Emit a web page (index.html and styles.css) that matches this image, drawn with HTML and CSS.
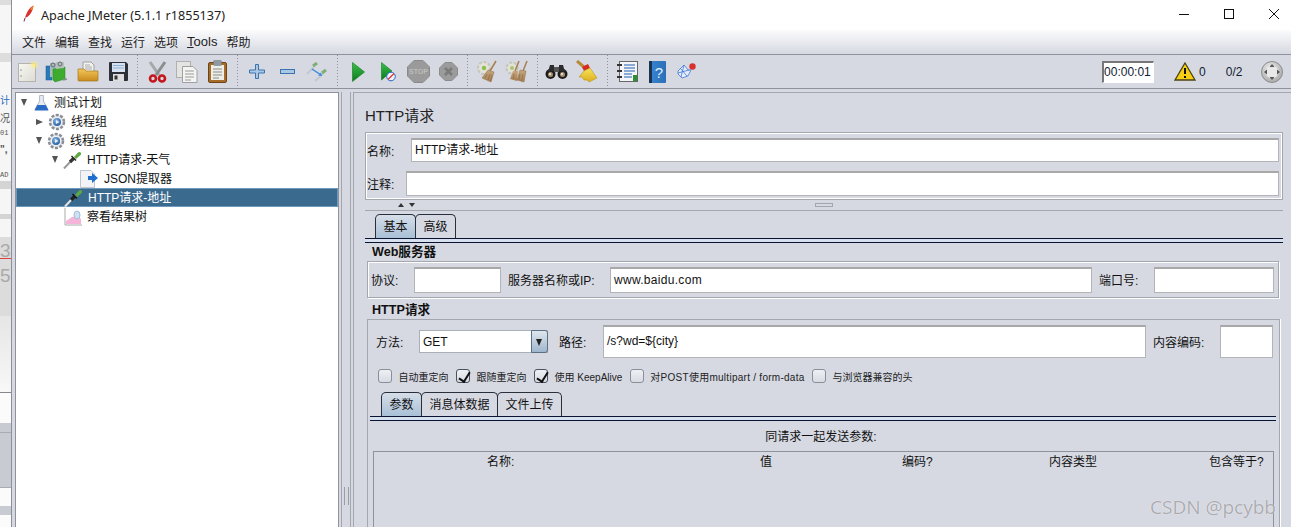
FILE: index.html
```html
<!DOCTYPE html>
<html lang="zh">
<head>
<meta charset="utf-8">
<title>Apache JMeter</title>
<link rel="stylesheet" href="styles.css">
</head>
<body>
<svg class="defs" width="0" height="0" aria-hidden="true">
  <defs>
    <linearGradient id="gFolder" x1="0" y1="0" x2="0" y2="1"><stop offset="0" stop-color="#f4c65a"/><stop offset="1" stop-color="#c98a1c"/></linearGradient>
    <linearGradient id="gPage" x1="0" y1="0" x2="1" y2="1"><stop offset="0" stop-color="#f8f8f2"/><stop offset="1" stop-color="#dcdcd4"/></linearGradient>
    <linearGradient id="gPlay" x1="0" y1="0" x2="0" y2="1"><stop offset="0" stop-color="#3bc04a"/><stop offset="1" stop-color="#0c7a1e"/></linearGradient>
    <linearGradient id="gBroom" x1="0" y1="0" x2="0" y2="1"><stop offset="0" stop-color="#f7e35a"/><stop offset="1" stop-color="#dcae1e"/></linearGradient>
    <linearGradient id="gStraw" x1="0" y1="0" x2="0" y2="1"><stop offset="0" stop-color="#c8a67c"/><stop offset="1" stop-color="#a67e52"/></linearGradient>
    <linearGradient id="gBook" x1="0" y1="0" x2="1" y2="0"><stop offset="0" stop-color="#3a86d2"/><stop offset="1" stop-color="#2a6fb8"/></linearGradient>
    <radialGradient id="gBall" cx=".4" cy=".35" r=".7"><stop offset="0" stop-color="#8fbbe6"/><stop offset="1" stop-color="#1f5a9c"/></radialGradient>
    <radialGradient id="gKnob" cx=".4" cy=".3" r=".8"><stop offset="0" stop-color="#e8e8e8"/><stop offset="1" stop-color="#a4a4a4"/></radialGradient>
    <radialGradient id="gGlow" cx=".5" cy=".5" r=".5"><stop offset="0" stop-color="#ffef7a"/><stop offset="1" stop-color="#ffef7a" stop-opacity="0"/></radialGradient>
  </defs>
</svg>
<div class="page">
  <div class="backwin">
    <div class="bw s5 grey"></div>
    <div class="bw s48"></div>
    <div class="bw s9 grey"></div>
    <div class="bw s28"></div>
    <div class="bw bwt t-blue">计</div>
    <div class="bw bwt">况</div>
    <div class="bw bwt t-small">01</div>
    <div class="bw bwt t-gap">",</div>
    <div class="bw bwt t-small t-gap2">AD</div>
    <div class="bw s8 grey2"></div>
    <div class="bw s25"></div>
    <div class="bw s5 grey2"></div>
    <div class="bw s18"></div>
    <div class="bw big"><span class="bigt">3</span><span class="wavy"></span><span class="bigt b2">5</span></div>
    <div class="bw s77 grad"></div>
    <div class="bw s30 white"></div>
    <div class="bw s9 grey3"></div>
    <div class="bw s56 grey3 ruled"></div>
    <div class="bw s18 white"></div>
    <div class="bw s9 grey3"></div>
    <div class="bw fill white"></div>
  </div>
  <div class="app">
    <header class="titlebar">
      <svg class="feather" viewBox="0 0 14 18" width="14" height="18"><path d="M11.500 0.500 C8 2 4.500 7 3 13 L6 11.500 C9 9 11 5 11.500 0.500Z" fill="#d8322a"/><path d="M11.500 0.500 C10 1.500 9 3 8 4.500 L10.500 5 C11 3.500 11.300 2 11.500 0.500Z" fill="#f08a2a"/><path d="M3 13 L2 16.500" stroke="#7a2a50" stroke-width="1"/></svg>
      <span class="title">Apache JMeter (5.1.1 r1855137)</span>
      <div class="winbtns">
        <svg width="12" height="12" viewBox="0 0 12 12"><path d="M1 6.500H11" stroke="#111" stroke-width="1"/></svg>
        <svg width="12" height="12" viewBox="0 0 12 12"><rect x="1.500" y="1.500" width="9" height="9" fill="none" stroke="#111"/></svg>
        <svg width="12" height="12" viewBox="0 0 12 12"><path d="M1 1L11 11M11 1L1 11" stroke="#111"/></svg>
      </div>
    </header>
    <nav class="menubar">
      <span>文件</span><span>编辑</span><span>查找</span><span>运行</span><span>选项</span><span class="tools"><u>T</u>ools</span><span>帮助</span>
    </nav>
    <div class="toolbar">
      <div class="tgroup g1">
        <span class="slot"><svg width="22" height="22" viewBox="0 0 22 22"><rect x="1.500" y="2.500" width="17" height="18" fill="url(#gPage)" stroke="#b4b4ac"/><circle cx="4" cy="9" r=".8" fill="#888"/><circle cx="4" cy="15" r=".8" fill="#888"/><circle cx="17" cy="4" r="5" fill="url(#gGlow)"/></svg></span>
        <span class="slot"><svg class="nudge" width="24" height="24" viewBox="0 0 24 24"><rect x="2" y="6" width="6" height="14" fill="#2a79b8" stroke="#1c5a90" stroke-width=".5"/><rect x="6" y="3" width="6" height="14" fill="#a8bcba"/><circle cx="9" cy="5" r="2" fill="none" stroke="#667"/><path d="M9 9L21 7V19L11 22L9 20Z" fill="#3cab2e" stroke="#2a8a20" stroke-width=".5"/><path d="M12 2H20V8L12 9Z" fill="#b4c2bb"/><circle cx="16" cy="4" r="2" fill="none" stroke="#667"/><path d="M19 20L23 19" stroke="#8a8a8a" stroke-width="1.500"/></svg></span>
        <span class="slot"><svg width="22" height="22" viewBox="0 0 22 22"><path d="M6 1H14L17 4V12H6Z" fill="#f2f2ee" stroke="#a0a0a0"/><path d="M8 4H13M8 6H15M8 8H15" stroke="#aaa"/><path d="M1 8H7L9 10H21V19Q21 20 20 20H2Q1 20 1 19Z" fill="url(#gFolder)" stroke="#a8781e" stroke-width=".7"/></svg></span>
        <span class="slot"><svg width="21" height="21" viewBox="0 0 21 21"><path d="M1 2Q1 1 2 1H18L20 3V19Q20 20 19 20H2Q1 20 1 19Z" fill="#2c3038"/><rect x="4" y="2" width="13" height="9" fill="#d6e2f0"/><path d="M5 4.500H16M5 7H16" stroke="#8fb0d4"/><rect x="5" y="13" width="11" height="7" fill="#dedede"/><rect x="6.500" y="14.500" width="3" height="4" fill="#333"/></svg></span>
      </div>
      <div class="tgroup g2">
        <span class="slot"><svg width="19" height="22" viewBox="0 0 19 22"><path d="M2 1L11 14" stroke="#a4a8a8" stroke-width="3"/><path d="M17 1L8 14" stroke="#8a8e8e" stroke-width="3"/><circle cx="5" cy="17.500" r="3" fill="none" stroke="#c4161c" stroke-width="2.600"/><circle cx="14" cy="17.500" r="3" fill="none" stroke="#c4161c" stroke-width="2.600"/></svg></span>
        <span class="slot"><svg width="22" height="22" viewBox="0 0 22 22"><rect x=".5" y=".5" width="14" height="16" fill="#e4e4e2" stroke="#b0b0ae"/><path d="M6.500 5.500H17L21 9.500V21.500H6.500Z" fill="#f4f4f2" stroke="#a0a0a0"/><path d="M9 10H18M9 13H18M9 16H18M9 19H15" stroke="#9a9a9a"/></svg></span>
        <span class="slot"><svg width="19" height="23" viewBox="0 0 19 23"><rect x=".5" y="2.500" width="18" height="20" rx="1.500" fill="#a66c2a" stroke="#6e4415"/><path d="M3 5H16V20H3Z" fill="#eeeee8"/><rect x="5.500" y=".5" width="8" height="5" rx="1" fill="#8f9aa0" stroke="#6a7278" stroke-width=".5"/><path d="M5 9H14M5 12H14M5 15H14M5 18H11" stroke="#8a8a8a"/></svg></span>
      </div>
      <div class="tgroup g3">
        <span class="slot"><svg width="16" height="15" viewBox="0 0 16 15"><path d="M6.500 .5H9.500V6H15.500V9H9.500V14.500H6.500V9H.5V6H6.500Z" fill="#a9c8e4" stroke="#3a73ad"/></svg></span>
        <span class="slot"><svg width="15" height="6" viewBox="0 0 15 6"><rect x=".5" y=".5" width="14" height="4" fill="#a9c8e4" stroke="#3a73ad"/></svg></span>
        <span class="slot"><svg width="22" height="20" viewBox="0 0 22 20"><path d="M1 12L8 5" stroke="#c4c8cc" stroke-width="2"/><path d="M7 4L11 1" stroke="#7fae72" stroke-width="3"/><path d="M9 19L17 12" stroke="#c4c8cc" stroke-width="2"/><path d="M16 11L20 8" stroke="#7fae72" stroke-width="3"/><path d="M6 7L15 13" stroke="#3a8ae0" stroke-width="1.500"/><path d="M16 14L12 13.500L15 10.500Z" fill="#3a8ae0"/></svg></span>
      </div>
      <div class="tgroup g4">
        <span class="slot"><svg width="13" height="20" viewBox="0 0 13 20"><path d="M.5 .5L12.500 10L.5 19.500Z" fill="url(#gPlay)" stroke="#0f7a1c" stroke-width=".6"/></svg></span>
        <span class="slot"><svg width="15" height="20" viewBox="0 0 15 20"><path d="M.5 .5L11 9L.5 18Z" fill="url(#gPlay)" stroke="#0f7a1c" stroke-width=".6"/><circle cx="10" cy="14.500" r="4.300" fill="#eef2fa" stroke="#2a62c8"/><path d="M7 17.500L13 11.500" stroke="#d33" stroke-width="1.200"/></svg></span>
        <span class="slot"><svg width="23" height="23" viewBox="0 0 23 23"><path d="M7 .5H16L22.500 7V16L16 22.500H7L.5 16V7Z" fill="#9a9a9a" stroke="#8a8a8a"/><text x="11.500" y="14" text-anchor="middle" class="stoptxt">STOP</text></svg></span>
        <span class="slot"><svg width="19" height="19" viewBox="0 0 19 19"><path d="M6 .5H13L18.500 6V13L13 18.500H6L.5 13V6Z" fill="#9b9b9b" stroke="#8c8c8c"/><path d="M6 6L13 13M13 6L6 13" stroke="#7a7a7a" stroke-width="2.500"/></svg></span>
      </div>
      <div class="tgroup g5">
        <span class="slot"><svg width="21" height="23" viewBox="0 0 21 23"><circle cx="8" cy="8" r="6" fill="#e2e2d8" stroke="#c4c4ba" stroke-width="2" stroke-dasharray="3 1.500"/><circle cx="8" cy="8" r="2.200" fill="#8cc04a"/><path d="M20 1L14 11" stroke="#a67e52" stroke-width="1.500"/><path d="M12 10L18 12L15 22L6 18Z" fill="url(#gStraw)" stroke="#8c6c47" stroke-width=".5"/><path d="M11 14L9 18M14 14L12 20M16 15L14.500 21" stroke="#8c6c47" stroke-width=".7"/></svg></span>
        <span class="slot"><svg width="23" height="23" viewBox="0 0 23 23"><circle cx="7" cy="8" r="5.500" fill="#e2e2d8" stroke="#c4c4ba" stroke-width="2" stroke-dasharray="3 1.500"/><circle cx="7" cy="8" r="2" fill="#a9c66a"/><path d="M14 1L10 11M22 1L18 11" stroke="#a67e52" stroke-width="1.500"/><path d="M8 11L13 11L12 21L5 19Z" fill="url(#gStraw)"/><path d="M15 10L21 11L19 22L12 20Z" fill="url(#gStraw)" stroke="#8c6c47" stroke-width=".5"/><path d="M9 14L8 19M15 14L14 20M18 14L16.500 21" stroke="#8c6c47" stroke-width=".7"/></svg></span>
      </div>
      <div class="tgroup g6">
        <span class="slot"><svg width="23" height="17" viewBox="0 0 23 17"><circle cx="5.500" cy="11" r="5" fill="#1c1c1c"/><circle cx="17.500" cy="11" r="5" fill="#1c1c1c"/><path d="M3 9L5 2H9V8ZM20 9L18 2H14V8Z" fill="#2c2c2c"/><rect x="9" y="4" width="5" height="5" fill="#555"/><circle cx="5.500" cy="11.500" r="2.500" fill="#a89070"/><circle cx="17.500" cy="11.500" r="2.500" fill="#a89070"/><circle cx="5" cy="11" r="1" fill="#eee"/><circle cx="17" cy="11" r="1" fill="#eee"/></svg></span>
        <span class="slot"><svg width="23" height="23" viewBox="0 0 23 23"><path d="M2 1L9 7" stroke="#b98a3a" stroke-width="3"/><path d="M7 7L13 4L15 8L9 11Z" fill="#d62c20"/><path d="M9 11L15 8L22 18L14 22L12 20L9 20L7 17L4 17Z" fill="url(#gBroom)" stroke="#b8961c" stroke-width=".6"/></svg></span>
      </div>
      <div class="tgroup g7">
        <span class="slot"><svg width="21" height="21" viewBox="0 0 21 21"><rect x="2.500" y=".5" width="18" height="20" fill="#f4f5f8" stroke="#666"/><path d="M7 4H18M7 7H18M7 10H18M7 13H15M7 16H15" stroke="#1d5fb0"/><rect x="16" y="14" width="4" height="6" fill="#2a9030"/><path d="M0 4H5M0 10H5M0 16H5" stroke="#333" stroke-width="2"/></svg></span>
        <span class="slot"><svg width="17" height="22" viewBox="0 0 17 22"><rect width="17" height="22" rx="1" fill="url(#gBook)"/><rect width="3" height="22" fill="#1b3350"/><text x="10" y="17" text-anchor="middle" class="booktxt">?</text></svg></span>
        <span class="slot"><svg width="20" height="17" viewBox="0 0 20 17"><circle cx="15.500" cy="3.500" r="3.200" fill="#d8322c"/><path d="M1 8L7 2L11 7L14 7L11 13L5 15L1 11Z" fill="#e6ecf6" stroke="#3f78d8" stroke-width=".8"/><path d="M3 5L10 13M7 2L4 14M1 10L12 7" stroke="#3f78d8" stroke-width=".8"/></svg></span>
      </div>
      <div class="status">
        <span class="timer">00:00:01</span>
        <svg class="warn" width="22" height="19" viewBox="0 0 22 19"><path d="M11 1L21 18H1Z" fill="#f4cf15" stroke="#4b4210" stroke-width="1.300"/><path d="M11 6V12M11 14V16" stroke="#111" stroke-width="2"/></svg>
        <span class="count">0</span>
        <span class="ratio">0/2</span>
        <svg class="knob" width="22" height="22" viewBox="0 0 22 22"><circle cx="11" cy="11" r="10.500" fill="url(#gKnob)" stroke="#8c8c8c"/><circle cx="11" cy="11" r="6.500" fill="#e8e8e8"/><path d="M11 3L13.500 6H8.500ZM11 19L13.500 16H8.500ZM3 11L6 8.500V13.500ZM19 11L16 8.500V13.500Z" fill="#555"/></svg>
      </div>
    </div>
    <main class="main">
      <section class="treepane">
        <div class="row r0"><i class="arrow down root"></i>
          <svg width="15" height="18" viewBox="0 0 16 18"><path d="M6 1H10V7L15 16H1L6 7Z" fill="#e8edf3" stroke="#a8b2c0"/><path d="M3.500 11H12.500L15.500 17H.5Z" fill="#2a6ac4"/></svg>
          <span>测试计划</span></div>
        <div class="row r1"><i class="arrow right"></i>
          <svg width="18" height="18" viewBox="0 0 18 18"><circle cx="9" cy="9" r="7" fill="#e4e7ec" stroke="#8a8e96" stroke-width="2.500" stroke-dasharray="3 1.500"/><circle cx="9" cy="9" r="5" fill="#f0f2f6"/><circle cx="9" cy="9" r="4" fill="url(#gBall)"/><path d="M8 7L11.500 9L8 11Z" fill="#e6eef6"/></svg>
          <span>线程组</span></div>
        <div class="row r1"><i class="arrow down"></i>
          <svg width="18" height="18" viewBox="0 0 18 18"><circle cx="9" cy="9" r="7" fill="#e4e7ec" stroke="#8a8e96" stroke-width="2.500" stroke-dasharray="3 1.500"/><circle cx="9" cy="9" r="5" fill="#f0f2f6"/><circle cx="9" cy="9" r="4" fill="url(#gBall)"/><path d="M8 7L11.500 9L8 11Z" fill="#e6eef6"/></svg>
          <span>线程组</span></div>
        <div class="row r2"><i class="arrow down"></i>
          <svg width="19" height="18" viewBox="0 0 19 18"><path d="M1 17.500L8 10" stroke="#9a9a9a" stroke-width="2"/><path d="M7 11L10.500 7.500" stroke="#333" stroke-width="3.200"/><path d="M8.500 5L13 9.500" stroke="#222" stroke-width="1.500"/><path d="M11 6L15 1.500Q17 .5 18 2Q18.500 3.500 17 4.500L13 8Z" fill="#5da840"/></svg>
          <span>HTTP请求-天气</span></div>
        <div class="row r3">
          <svg width="19" height="18" viewBox="0 0 19 18"><path d="M.5 .5H11L14.500 4V17.500H.5Z" fill="#f2f3f6" stroke="#c0c4cc"/><path d="M8 6H12V3L18 8L12 13V10H8Z" fill="#1f6fd0"/></svg>
          <span>JSON提取器</span></div>
        <div class="row r2 sel">
          <svg width="19" height="18" viewBox="0 0 19 18"><path d="M1 17.500L8 10" stroke="#e6e6e6" stroke-width="2"/><path d="M7 11L10.500 7.500" stroke="#222" stroke-width="3.200"/><path d="M8.500 5L13 9.500" stroke="#111" stroke-width="1.500"/><path d="M11 6L15 1.500Q17 .5 18 2Q18.500 3.500 17 4.500L13 8Z" fill="#5da840"/></svg>
          <span>HTTP请求-地址</span></div>
        <div class="row r2 leaf">
          <svg width="18" height="18" viewBox="0 0 18 18"><path d="M1 0V17H18" fill="none" stroke="#aaa"/><path d="M2 16V13L8 9L13 8L17 11V16Z" fill="#f5b5d8"/><ellipse cx="13" cy="7" rx="3" ry="4" fill="#cfe0f2" stroke="#a4bcd6"/></svg>
          <span>察看结果树</span></div>
      </section>
      <div class="split"><span class="grip"></span></div>
      <section class="editor">
        <h1 class="ed-title">HTTP请求</h1>
        <div class="namebox">
          <div class="namerow nr1"><label>名称:</label><div class="field">HTTP请求-地址</div></div>
          <div class="namerow nr2"><label>注释:</label><div class="field"></div></div>
        </div>
        <div class="divider"><span class="nubs"><i class="nub up"></i><i class="nub dn"></i></span><span class="dgrip"></span></div>
        <div class="tabs">
          <span class="tab on">基本</span><span class="tab">高级</span>
        </div>
        <div class="tabline"></div>
        <h2 class="grp">Web服务器</h2>
        <div class="box srv">
          <label class="l-proto">协议:</label><div class="field w-proto"></div>
          <label class="l-srv">服务器名称或IP:</label><div class="field w-host">www.baidu.com</div>
          <label class="l-port">端口号:</label><div class="field w-port"></div>
        </div>
        <h2 class="grp g-http">HTTP请求</h2>
        <div class="box http">
          <div class="pathrow">
            <label class="l-method">方法:</label>
            <div class="combo"><span>GET</span><i class="cbtn"></i></div>
            <label class="l-path">路径:</label><div class="field w-path">/s?wd=${city}</div>
            <label class="l-enc">内容编码:</label><div class="field w-enc"></div>
          </div>
          <div class="checks">
            <span class="ck"><i class="cb"></i><b>自动重定向</b></span>
            <span class="ck"><i class="cb on"></i><b>跟随重定向</b></span>
            <span class="ck"><i class="cb on"></i><b>使用 KeepAlive</b></span>
            <span class="ck"><i class="cb"></i><b class="wide">对POST使用multipart / form-data</b></span>
            <span class="ck"><i class="cb"></i><b>与浏览器兼容的头</b></span>
          </div>
          <div class="tabs t2">
            <span class="tab on">参数</span><span class="tab">消息体数据</span><span class="tab">文件上传</span>
          </div>
          <div class="tabline"></div>
          <div class="sendlabel">同请求一起发送参数:</div>
          <div class="table">
            <span class="c1">名称:</span><span class="c2">值</span><span class="c3">编码?</span><span class="c4">内容类型</span><span class="c5">包含等于?</span>
          </div>
        </div>
      </section>
    </main>
  </div>
  <div class="watermark">CSDN @pcybb</div>
</div>
</body>
</html>
```
FILE: styles.css
```css
* { box-sizing: border-box; }
html, body { margin: 0; padding: 0; }
body { font-family: "Liberation Sans", "Noto Sans CJK SC", sans-serif; font-size: 12px; color: #111; overflow: hidden; }
.defs { position: absolute; }
.page { position: relative; display: flex; width: 1291px; height: 527px; overflow: hidden; background: #d6d9e2; }

.backwin { width: 12px; flex: none; display: flex; flex-direction: column; background: #f6f6f6; border-right: 1px solid #8d8f96; overflow: hidden; }
.bw { flex: none; }
.grey { background: #dddddd; }
.grey2 { background: #d4d4d4; }
.grey3 { background: #c8cbd2; }
.white { background: #fbfbfb; }
.s5 { height: 5px; }
.s8 { height: 8px; }
.s9 { height: 9px; }
.s18 { height: 18px; }
.s25 { height: 25px; }
.s28 { height: 28px; }
.s30 { height: 30px; }
.s48 { height: 48px; }
.s56 { height: 56px; }
.s77 { height: 77px; }
.grad { background: linear-gradient(#e6e6e6, #f8f8f8); border-bottom: 1px solid #85878c; }
.ruled { border-top: 1px solid #a8abb2; border-bottom: 1px solid #a8abb2; }
.bwt { height: 17px; line-height: 17px; font-size: 10px; white-space: nowrap; color: #555; }
.t-blue { color: #2a6ac0; height: 20px; line-height: 22px; }
.t-small { font-family: "Liberation Mono", monospace; font-size: 7px; height: 12px; line-height: 12px; }
.t-gap { height: 26px; line-height: 22px; font-weight: 700; }
.t-gap2 { height: 16px; line-height: 20px; }
.fill { flex: 1; }
.big { height: 79px; background: #dcdcdc; color: #aaa; font-size: 19px; overflow: hidden; white-space: nowrap; }
.bigt { display: block; height: 21px; line-height: 28px; }
.wavy { display: block; height: 1px; background: #e04040; margin-bottom: 6px; }
.b2 { line-height: 22px; }

.app { flex: 1; min-width: 0; display: flex; flex-direction: column; }
.titlebar { height: 30px; flex: none; background: #fff; display: flex; align-items: center; padding-left: 10px; }
.feather { margin-right: 5px; margin-top: -3px; }
.title { font-size: 12.6px; color: #222; font-family: "Noto Sans", sans-serif; }
.winbtns { margin-left: auto; display: flex; gap: 33px; padding-right: 11px; align-items: center; margin-top: -2px; }

.menubar { height: 25px; flex: none; background: linear-gradient(#fbfbfc, #d6d9e2); display: flex; gap: 9px; align-items: center; padding: 0 0 2px 10px; color: #222; border-bottom: 1px solid #8f929a; }
.tools { font-size: 13px; }

.toolbar { height: 34px; flex: none; display: flex; align-items: center; border-bottom: 1px solid #8f929a; }
.tgroup { display: flex; align-items: center; height: 100%; background: repeating-linear-gradient(#8f929a 0 1px, transparent 1px 3px) right top / 1px 100% no-repeat; }
.slot { width: 30px; height: 100%; display: flex; align-items: center; justify-content: center; }
.nudge { margin-right: 5px; }
.g1 { padding: 0 5px 0 1px; }
.g2 { padding: 0 6px 0 4px; }
.g3 { padding: 0 6px 0 4px; }
.g4 { padding: 0 5px 0 5px; }
.g5 { padding: 0 7px 0 3px; }
.g6 { padding: 0 7px 0 3px; }
.g7 { padding-left: 4px; background: none; }
.stoptxt { font: bold 7px "Liberation Sans", sans-serif; fill: #bdbdbd; }
.booktxt { font: 15px "Liberation Sans", sans-serif; fill: #dfeeff; }
.status { margin-left: auto; display: flex; align-items: center; padding-right: 8px; }
.timer { width: 52px; height: 22px; background: #fff; border: 1px solid #fff; border-left: 2px solid #777; border-top: 2px solid #777; line-height: 18px; color: #123; }
.warn { margin-left: 20px; }
.count { margin-left: 3px; color: #123; }
.ratio { margin-left: 20px; color: #123; }
.knob { margin-left: 18.600px; }

.main { flex: 1; min-height: 0; display: flex; padding-top: 3px; }
.treepane { width: 324px; margin-left: 3px; margin-bottom: -3px; flex: none; background: #fff; border: 1px solid #8f929a; }
.row { height: 19px; display: flex; align-items: center; gap: 5px; color: #111; }
.row span { margin-top: -2px; }
.r0 { padding-left: 5px; }
.r1 { padding-left: 20px; }
.r2 { padding-left: 36px; }
.r3 { padding-left: 64px; }
.row.sel { padding-left: 47px; background: #3b6a8f; color: #fff; border: 1px solid #6f99bb; }
.row.leaf { padding-left: 48px; }
.arrow { display: block; flex: none; width: 0; height: 0; }
.arrow.down { border-left: 3.500px solid transparent; border-right: 3.500px solid transparent; border-top: 7px solid #555; }
.arrow.root { margin-right: 2px; }
.arrow.right { border-top: 3.500px solid transparent; border-bottom: 3.500px solid transparent; border-left: 7px solid #555; }

.split { width: 14px; flex: none; position: relative; background: linear-gradient(90deg, transparent 2px, #a3a6ae 2px 3px, transparent 3px 11px, #a3a6ae 11px 12px, transparent 12px); }
.grip { position: absolute; left: 5px; bottom: 22px; width: 5px; height: 18px; border-left: 1px solid #9a9da4; border-right: 1px solid #9a9da4; }

.editor { flex: 1; min-width: 0; padding-left: 11px; border-top: 1px solid #a3a6ae; border-left: 1px solid #a3a6ae; overflow: hidden; }
.ed-title { font-size: 15px; font-weight: 400; margin: 13px 0 6px; line-height: 20px; color: #222; }
.namebox { width: 918px; height: 68px; border: 1px solid #a4a7ae; box-shadow: inset 0 0 0 1px #fff; padding: 5px 3px 0 1px; }
.namerow { display: flex; align-items: center; }
.namerow label { flex: none; }
.nr1 { height: 24px; margin-bottom: 9px; }
.nr1 label { width: 44px; }
.nr2 { height: 25px; }
.nr2 label { width: 39px; }
.field { flex: 1; height: 100%; background: #fff; border: 1px solid #b2b4b8; border-top: 2px solid #a8a8a8; padding-left: 3px; line-height: 20px; }
.divider { width: 918px; height: 11px; border-bottom: 1px solid #a4a7ae; position: relative; display: flex; align-items: center; justify-content: center; }
.nubs { position: absolute; left: 33px; top: 3px; display: flex; gap: 5px; }
.nub { width: 0; height: 0; border-left: 3.500px solid transparent; border-right: 3.500px solid transparent; }
.nub.up { border-bottom: 4px solid #333; }
.nub.dn { border-top: 4px solid #333; }
.dgrip { width: 18px; height: 4px; border: 1px solid #a3a6ae; }

.tabs { display: flex; padding-left: 10px; height: 24px; margin-top: 3px; }
.tab { height: 24px; padding: 0 7.500px; line-height: 25px; border: 1px solid #2a2f3c; border-bottom: 0; border-radius: 5px 5px 0 0; margin-right: -1px; }
.tab.on { background: linear-gradient(#d6dee8, #a9c0d6); }
.tabline { height: 5px; width: 918px; border-top: 1px solid #0a1430; border-bottom: 1px solid #0a1430; background: #d6e0ee; }
.grp { font-size: 12.600px; font-weight: 700; margin: 0 0 0 7px; line-height: 18px; height: 18px; color: #111; }
.box { border: 1px solid #a4a7ae; box-shadow: 1px 1px 0 #fff, inset 1px 1px 0 #fff; }
.srv { width: 912px; height: 37px; margin-left: 2px; display: flex; align-items: center; padding-left: 3px; }
.srv label { flex: none; }
.srv .field { flex: none; height: 26px; line-height: 23px; }
.l-proto { width: 43px; }
.w-proto { width: 87px; }
.l-srv { width: 102px; margin-left: 7px; }
.w-host { width: 482px; letter-spacing: .3px; }
.l-port { width: 55px; margin-left: 7px; }
.w-port { width: 120px; }
.g-http { height: 21px; padding-top: 3px; line-height: 18px; }
.http { width: 913px; height: 230px; margin-left: 2px; padding: 5px 0 0 2px; box-shadow: 1px 0 0 #fff; }
.pathrow { display: flex; align-items: center; height: 33px; padding-left: 6px; }
.pathrow label { flex: none; }
.l-method { width: 43px; }
.combo { width: 129px; height: 23px; background: #fff; border: 1px solid #aab0b8; display: flex; align-items: center; padding-left: 3px; position: relative; flex: none; }
.cbtn { position: absolute; right: -1px; top: -1px; bottom: -1px; width: 17px; background: linear-gradient(#dfe6ee, #9fb6cc); border: 1px solid #5a6e84; border-radius: 0 3px 3px 0; }
.cbtn::after { content: ""; position: absolute; left: 4px; top: 8px; border-left: 3.500px solid transparent; border-right: 3.500px solid transparent; border-top: 7px solid #222; }
.l-path { width: 44px; margin-left: 11px; }
.w-path { width: 543px; flex: none; line-height: 29px; }
.l-enc { width: 67px; margin-left: 7px; }
.w-enc { flex: none; width: 53px; }
.checks { display: flex; gap: 7.500px; height: 14px; align-items: center; margin-top: 11px; padding-left: 8px; }
.ck { display: flex; align-items: center; gap: 6.500px; font-size: 10px; color: #222; }
.ck b { font-weight: 400; white-space: nowrap; }
.ck .wide { letter-spacing: .27px; }
.cb { width: 14px; height: 14px; flex: none; background: linear-gradient(#eef0f4, #d8dbe2); border: 1px solid #8a8e96; border-radius: 3px; display: block; position: relative; }
.cb.on { border-color: #4a5260; }
.cb.on::after { content: ""; position: absolute; left: 4px; top: 0; width: 5px; height: 10px; border-right: 2.500px solid #111; border-bottom: 2px solid #111; transform: rotate(32deg); }
.t2 { margin-top: 9px; padding-left: 11px; }
.http .tabline { width: 906px; }
.sendlabel { width: 902px; text-align: center; margin-top: 8px; line-height: 17px; }
.table { margin-left: 3px; height: 100px; width: 901px; margin-top: 5px; border: 1px solid #8f929a; border-bottom: 0; display: flex; line-height: 21px; }
.table span { display: block; flex: none; }
.c1 { margin-left: 113px; width: 273px; }
.c2 { width: 142px; }
.c3 { width: 147px; }
.c4 { width: 160px; }

.watermark { position: absolute; right: 15px; bottom: 7px; font-family: "Open Sans", sans-serif; font-size: 19px; color: rgba(150,150,155,.8); text-shadow: 0 0 1px #fff; }
```
